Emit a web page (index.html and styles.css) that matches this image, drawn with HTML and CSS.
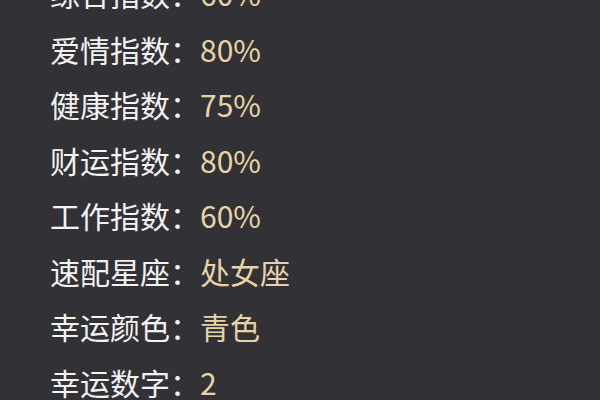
FILE: index.html
```html
<!DOCTYPE html>
<html lang="zh-CN">
<head>
<meta charset="utf-8">
<link rel="stylesheet" href="styles.css">
</head>
<body>
<ul class="list">
  <li class="row"><span class="label">综合指数：</span><span class="value">60%</span></li>
  <li class="row"><span class="label">爱情指数：</span><span class="value">80%</span></li>
  <li class="row"><span class="label">健康指数：</span><span class="value">75%</span></li>
  <li class="row"><span class="label">财运指数：</span><span class="value">80%</span></li>
  <li class="row"><span class="label">工作指数：</span><span class="value">60%</span></li>
  <li class="row"><span class="label">速配星座：</span><span class="value">处女座</span></li>
  <li class="row"><span class="label">幸运颜色：</span><span class="value">青色</span></li>
  <li class="row"><span class="label">幸运数字：</span><span class="value">2</span></li>
</ul>
</body>
</html>
```

FILE: styles.css
```css
html, body {
  margin: 0;
  padding: 0;
  width: 600px;
  height: 400px;
  overflow: hidden;
  background: #323136;
}
.list {
  list-style: none;
  margin: -34px 0 0 0;
  padding: 0 0 0 50px;
  font-family: "Noto Sans CJK SC", "Noto Sans", sans-serif;
  font-size: 30px;
}
.row {
  display: flex;
  align-items: center;
  height: 55.5px;
  line-height: 55.5px;
  white-space: nowrap;
}
.label {
  color: #f2f2f2;
}
.value {
  color: #e6d4a6;
}
```
